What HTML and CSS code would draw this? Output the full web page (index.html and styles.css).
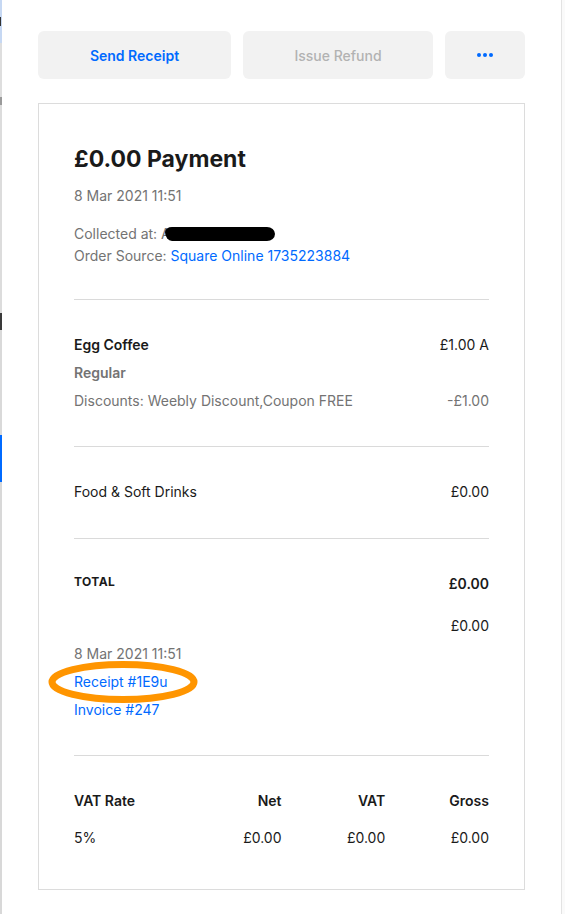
FILE: index.html
```html
<!DOCTYPE html>
<html lang="en">
<head>
<meta charset="utf-8">
<title>Payment</title>
<link rel="stylesheet" href="styles.css">
</head>
<body>
<div class="page">
  <div class="edge-left">
    <div class="seg seg-lightblue"><div class="mark mark-dark"></div></div>
    <div class="seg seg-gray1"></div>
    <div class="seg seg-mark2"></div>
    <div class="seg seg-gray2"></div>
    <div class="seg seg-mark3"></div>
    <div class="seg seg-gray3"></div>
    <div class="seg seg-blue"></div>
    <div class="seg seg-rest"></div>
  </div>

  <main class="main">
    <div class="actions">
      <button class="btn btn-primary">Send Receipt</button>
      <button class="btn btn-disabled">Issue Refund</button>
      <button class="btn btn-more" aria-label="More"><span class="dot"></span><span class="dot"></span><span class="dot"></span></button>
    </div>

    <section class="card">
      <div class="sec sec-head">
        <h1 class="title">£0.00 Payment</h1>
        <div class="muted date">8 Mar 2021 11:51</div>
        <div class="muted meta first">Collected at: A<span class="redact"></span></div>
        <div class="muted meta">Order Source: <a class="link">Square Online 1735223884</a></div>
      </div>

      <div class="sec">
        <div class="row"><span class="strong">Egg Coffee</span><span>£1.00 A</span></div>
        <div class="row"><span class="muted strong">Regular</span></div>
        <div class="row muted"><span>Discounts: Weebly Discount,Coupon FREE</span><span>-£1.00</span></div>
      </div>

      <div class="sec sec-food">
        <div class="row"><span>Food &amp; Soft Drinks</span><span>£0.00</span></div>
      </div>

      <div class="sec sec-total">
        <div class="row total-row"><span class="total-label">TOTAL</span><span class="strong total-amt">£0.00</span></div>
        <div class="row amt2"><span></span><span>£0.00</span></div>
        <div class="row muted"><span>8 Mar 2021 11:51</span></div>
        <div class="row"><span class="circled"><a class="link">Receipt #1E9u</a><svg class="ring" width="152" height="44" viewBox="0 0 152 44"><ellipse cx="75" cy="22" rx="71" ry="17.5" fill="none" stroke="#ff9500" stroke-width="7"/></svg></span></div>
        <div class="row"><a class="link">Invoice #247</a></div>
      </div>

      <div class="sec sec-vat">
        <div class="vat vat-head"><span>VAT Rate</span><span>Net</span><span>VAT</span><span>Gross</span></div>
        <div class="vat vat-row"><span>5%</span><span>£0.00</span><span>£0.00</span><span>£0.00</span></div>
      </div>
    </section>
  </main>

  <div class="edge-right"></div>
</div>
</body>
</html>
```

FILE: styles.css
```css
* { box-sizing: border-box; }
html, body { margin: 0; padding: 0; background: #fff; }
body {
  font-family: Inter, "Noto Sans", "Liberation Sans", sans-serif;
  color: #1a1a1a;
  font-size: 14px;
}
.page {
  display: flex;
  width: 565px;
  height: 914px;
  overflow: hidden;
}

/* left sliver of neighbouring panel */
.edge-left {
  width: 2px;
  display: flex;
  flex-direction: column;
  background: #d8d8d8;
}
.seg { width: 2px; }
.seg-lightblue { height: 43px; background: #c6d8f3; padding-top: 17px; }
.mark-dark { width: 1px; height: 9px; background: #333; }
.seg-gray1 { height: 54px; background: #dedede; }
.seg-mark2 { height: 8px; background: #9a9a9a; }
.seg-gray2 { height: 208px; background: #dcdcdc; }
.seg-mark3 { height: 17px; background: #3a3a3a; }
.seg-gray3 { height: 105px; background: #d9d9d9; }
.seg-blue { height: 47px; background: #006aff; }
.seg-rest { flex: 1; background: #d8d8d8; }

.edge-right {
  width: 4px;
  border-left: 1px solid #e3e3e3;
  background: #fafafa;
}

.main {
  flex: 1;
  padding: 31px 36px 0;
}

/* buttons */
.actions {
  display: grid;
  grid-template-columns: 193px 190px 1fr;
  gap: 12px;
}
.btn {
  height: 48px;
  border: 0;
  border-radius: 6px;
  background: #f2f2f2;
  font-family: inherit;
  font-size: 14px;
  font-weight: 600;
  padding: 0;
}
.btn-primary { color: #006aff; }
.btn-disabled { color: #b2b2b2; font-weight: 500; }
.btn-more {
  display: flex;
  align-items: center;
  justify-content: center;
  gap: 2px;
}
.dot {
  width: 4px;
  height: 4px;
  border-radius: 50%;
  background: #006aff;
}

/* card */
.card {
  margin-top: 24px;
  border: 1px solid #dcdcdc;
  padding: 39px 35px 37px;
}
.sec {
  border-top: 1px solid #dadada;
  padding: 31px 0;
}
.sec-head {
  border-top: 0;
  padding: 0 0 32px;
}
.title {
  margin: 0;
  font-size: 23px;
  line-height: 32px;
  font-weight: 700;
  color: #1a1a1a;
}
.muted { color: #737373; }
.date { margin-top: 11px; line-height: 20px; }
.meta { line-height: 22px; }
.meta.first { margin-top: 17px; }
.redact {
  display: inline-block;
  width: 110px;
  height: 14px;
  margin-left: -6px;
  vertical-align: -2px;
  background: #000;
  border-radius: 7px 8px 8px 7px / 5px 7px 7px 9px;
}
.link { color: #006aff; text-decoration: none; }
.strong { font-weight: 600; }

.row {
  display: flex;
  justify-content: space-between;
  align-items: center;
  line-height: 28px;
}

.sec-food { padding-bottom: 32px; }
.sec-total { padding-top: 29px; padding-bottom: 31px; }
.total-label {
  font-size: 12px;
  font-weight: 700;
  letter-spacing: 0.4px;
}
.total-amt { position: relative; top: 2px; }
.amt2 { margin-top: 16px; }

.circled { position: relative; display: inline-block; }
.ring {
  position: absolute;
  left: -26px;
  top: -8px;
}

.sec-vat { padding-bottom: 0; padding-top: 31px; }
.vat {
  display: grid;
  grid-template-columns: repeat(4, 1fr);
  line-height: 28px;
}
.vat span { text-align: right; }
.vat span:first-child { text-align: left; }
.vat-head { font-weight: 600; }
.vat-row { margin-top: 9px; }
```
